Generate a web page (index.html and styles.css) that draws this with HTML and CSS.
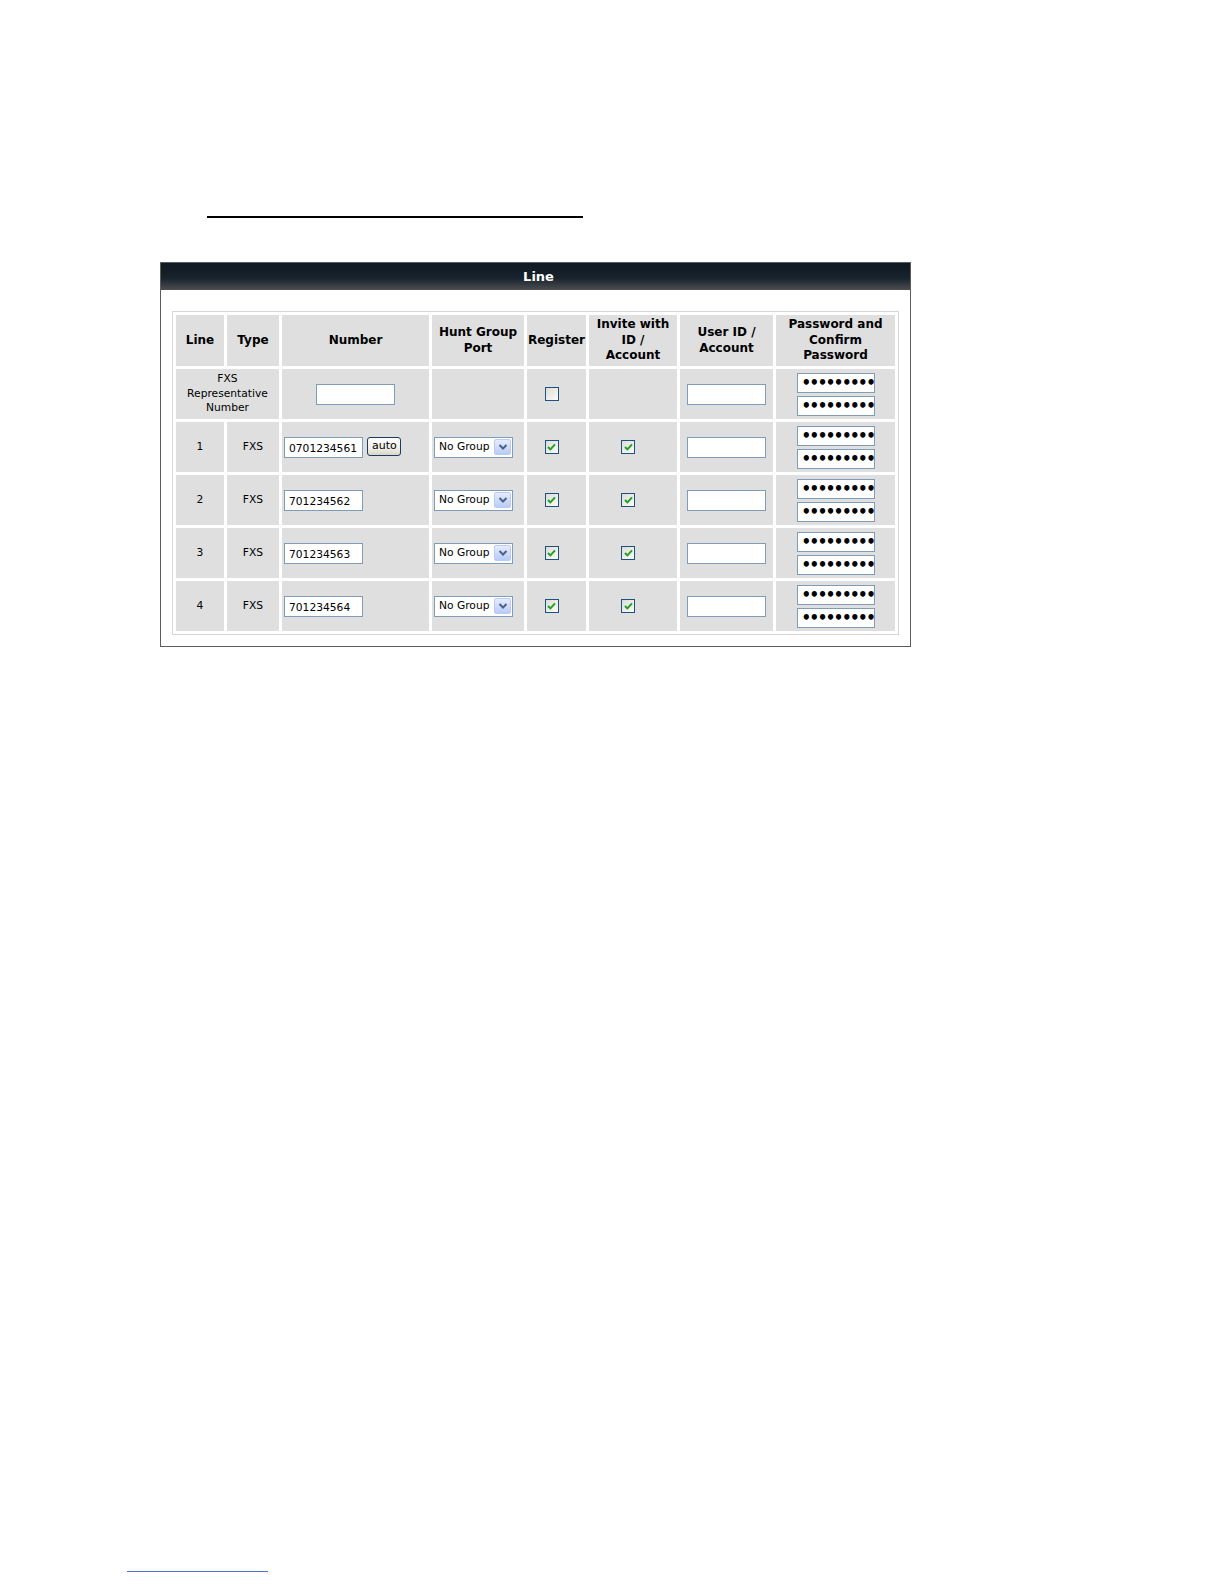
FILE: index.html
```html
<!doctype html>
<html lang="en">

<head>
  <meta charset="UTF-8" />
  <title>Line</title>
  <link rel="stylesheet" href="styles.css">
</head>

<body>
  <div class="title-rule"></div>

  <div class="panel">
    <div class="panel-head">Line</div>
    <div class="panel-body">
      <table class="lines">
        <tr class="head">
          <th class="c-line">Line</th>
          <th class="c-type">Type</th>
          <th class="c-num">Number</th>
          <th class="c-hunt">Hunt Group<br>Port</th>
          <th class="c-reg">Register</th>
          <th class="c-inv">Invite with<br>ID /<br>Account</th>
          <th class="c-user">User ID /<br>Account</th>
          <th class="c-pass">Password and<br>Confirm<br>Password</th>
        </tr>
        <tr>
          <td colspan="2" class="rep">FXS<br>Representative<br>Number</td>
          <td class="center"><input class="field" type="text" value=""></td>
          <td></td>
          <td class="center"><span class="check"></span></td>
          <td></td>
          <td class="center"><input class="field" type="text" value=""></td>
          <td class="center">
            <div class="pw-pair">
              <input class="field pw" type="password" value="123456789">
              <input class="field pw" type="password" value="123456789">
            </div>
          </td>
        </tr>
        <tr>
          <td>1</td>
          <td>FXS</td>
          <td class="left">
            <input class="field" type="text" value="0701234561">
            <button class="auto">auto</button>
          </td>
          <td class="left">
            <div class="select"><span class="sel-text">No Group</span><span class="sel-arrow"><svg width="10" height="8" viewBox="0 0 10 8"><path d="M1.5 2 L5 5.5 L8.5 2" stroke="#4d6185" stroke-width="2" fill="none"/></svg></span></div>
          </td>
          <td class="center"><span class="check on"><svg width="9" height="8" viewBox="0 0 9 8"><path d="M1 4 L3.4 6.4 L8 1.4" stroke="#21a121" stroke-width="2" fill="none"/></svg></span></td>
          <td class="center"><span class="check on"><svg width="9" height="8" viewBox="0 0 9 8"><path d="M1 4 L3.4 6.4 L8 1.4" stroke="#21a121" stroke-width="2" fill="none"/></svg></span></td>
          <td class="center"><input class="field" type="text" value=""></td>
          <td class="center">
            <div class="pw-pair">
              <input class="field pw" type="password" value="123456789">
              <input class="field pw" type="password" value="123456789">
            </div>
          </td>
        </tr>
        <tr>
          <td>2</td>
          <td>FXS</td>
          <td class="left"><input class="field" type="text" value="701234562"></td>
          <td class="left">
            <div class="select"><span class="sel-text">No Group</span><span class="sel-arrow"><svg width="10" height="8" viewBox="0 0 10 8"><path d="M1.5 2 L5 5.5 L8.5 2" stroke="#4d6185" stroke-width="2" fill="none"/></svg></span></div>
          </td>
          <td class="center"><span class="check on"><svg width="9" height="8" viewBox="0 0 9 8"><path d="M1 4 L3.4 6.4 L8 1.4" stroke="#21a121" stroke-width="2" fill="none"/></svg></span></td>
          <td class="center"><span class="check on"><svg width="9" height="8" viewBox="0 0 9 8"><path d="M1 4 L3.4 6.4 L8 1.4" stroke="#21a121" stroke-width="2" fill="none"/></svg></span></td>
          <td class="center"><input class="field" type="text" value=""></td>
          <td class="center">
            <div class="pw-pair">
              <input class="field pw" type="password" value="123456789">
              <input class="field pw" type="password" value="123456789">
            </div>
          </td>
        </tr>
        <tr>
          <td>3</td>
          <td>FXS</td>
          <td class="left"><input class="field" type="text" value="701234563"></td>
          <td class="left">
            <div class="select"><span class="sel-text">No Group</span><span class="sel-arrow"><svg width="10" height="8" viewBox="0 0 10 8"><path d="M1.5 2 L5 5.5 L8.5 2" stroke="#4d6185" stroke-width="2" fill="none"/></svg></span></div>
          </td>
          <td class="center"><span class="check on"><svg width="9" height="8" viewBox="0 0 9 8"><path d="M1 4 L3.4 6.4 L8 1.4" stroke="#21a121" stroke-width="2" fill="none"/></svg></span></td>
          <td class="center"><span class="check on"><svg width="9" height="8" viewBox="0 0 9 8"><path d="M1 4 L3.4 6.4 L8 1.4" stroke="#21a121" stroke-width="2" fill="none"/></svg></span></td>
          <td class="center"><input class="field" type="text" value=""></td>
          <td class="center">
            <div class="pw-pair">
              <input class="field pw" type="password" value="123456789">
              <input class="field pw" type="password" value="123456789">
            </div>
          </td>
        </tr>
        <tr>
          <td>4</td>
          <td>FXS</td>
          <td class="left"><input class="field" type="text" value="701234564"></td>
          <td class="left">
            <div class="select"><span class="sel-text">No Group</span><span class="sel-arrow"><svg width="10" height="8" viewBox="0 0 10 8"><path d="M1.5 2 L5 5.5 L8.5 2" stroke="#4d6185" stroke-width="2" fill="none"/></svg></span></div>
          </td>
          <td class="center"><span class="check on"><svg width="9" height="8" viewBox="0 0 9 8"><path d="M1 4 L3.4 6.4 L8 1.4" stroke="#21a121" stroke-width="2" fill="none"/></svg></span></td>
          <td class="center"><span class="check on"><svg width="9" height="8" viewBox="0 0 9 8"><path d="M1 4 L3.4 6.4 L8 1.4" stroke="#21a121" stroke-width="2" fill="none"/></svg></span></td>
          <td class="center"><input class="field" type="text" value=""></td>
          <td class="center">
            <div class="pw-pair">
              <input class="field pw" type="password" value="123456789">
              <input class="field pw" type="password" value="123456789">
            </div>
          </td>
        </tr>
      </table>
    </div>
  </div>

  <div class="foot-rule"></div>
</body>

</html>
```

FILE: styles.css
```css
body {
  margin: 0;
  background: #fff;
  font-family: "DejaVu Sans", Verdana, sans-serif;
}

.title-rule {
  margin: 216px 0 0 207px;
  width: 376px;
  border-top: 2px solid #000;
}

.panel {
  margin: 44px 0 0 160px;
  width: 749px;
  border: 1px solid #5c5c5c;
  background: #fff;
}

.panel-head {
  height: 27px;
  line-height: 27px;
  padding-left: 6px;
  text-align: center;
  color: #fff;
  font-weight: bold;
  font-size: 13px;
  background: linear-gradient(#0e1923 0%, #17222c 55%, #4c4e50 100%);
}

.panel-body {
  padding: 21px 11px 11px 11px;
}

.lines {
  width: 727px;
  border: 1px solid #d6d6d6;
  border-spacing: 3px;
  table-layout: fixed;
}

.lines th,
.lines td {
  background: #dfdfdf;
  padding: 0;
  text-align: center;
  vertical-align: middle;
  color: #000;
}

.lines tr {
  height: 50px;
}

.lines tr.head {
  height: 51px;
}

.lines th {
  font-size: 12px;
  font-weight: bold;
  line-height: 15.4px;
}

.lines td {
  font-size: 10.7px;
  line-height: 14.5px;
}

.c-line { width: 48px; }
.c-type { width: 52px; }
.c-num  { width: 147px; }
.c-hunt { width: 92px; }
.c-reg  { width: 59px; }
.c-inv  { width: 88px; }
.c-user { width: 93px; }
.c-pass { width: 119px; }

.lines td.left {
  text-align: left;
  padding-left: 2px;
}

.field {
  box-sizing: border-box;
  width: 79px;
  height: 21px;
  margin: 0;
  padding: 2px 4px 0;
  border: 1px solid #7f9db9;
  background: #fff;
  font-family: "DejaVu Sans", Verdana, sans-serif;
  font-size: 10.7px;
  color: #000;
  vertical-align: middle;
}

.pw-pair {
  display: flex;
  flex-direction: column;
  align-items: center;
  gap: 3px;
}

.field.pw {
  width: 78px;
  height: 20px;
  font-size: 15px;
  font-weight: bold;
  letter-spacing: -1.5px;
  line-height: 18px;
  padding: 0 0 0 4px;
}

.auto {
  box-sizing: border-box;
  width: 34px;
  height: 19px;
  margin: 0 0 2px 1px;
  padding: 0 0 2px;
  border: 1px solid #1d3c63;
  border-radius: 3px;
  background: linear-gradient(#ffffff, #f0efe8 60%, #d9d6c8);
  font-family: "DejaVu Sans", Verdana, sans-serif;
  font-size: 11px;
  color: #000;
  vertical-align: middle;
}

.select {
  box-sizing: border-box;
  display: inline-flex;
  align-items: center;
  justify-content: space-between;
  width: 79px;
  height: 21px;
  padding: 1px 1px 1px 4px;
  border: 1px solid #7f9db9;
  background: #fff;
  vertical-align: middle;
}

.sel-text {
  padding-top: 1px;
}

.sel-arrow {
  display: flex;
  align-items: center;
  justify-content: center;
  width: 17px;
  height: 16px;
  box-sizing: border-box;
  border: 1px solid #bccbf3;
  border-radius: 2px;
  background: linear-gradient(#e4ecfe, #b9cbf7);
}

.check {
  box-sizing: border-box;
  display: inline-flex;
  align-items: center;
  justify-content: center;
  width: 14px;
  height: 14px;
  margin-right: 10px;
  border: 1px solid #1c5180;
  background: linear-gradient(135deg, #dcdcd7, #fbfbf9);
  vertical-align: middle;
}

.foot-rule {
  margin: 924px 0 0 127px;
  width: 141px;
  border-top: 1px solid #4f6fc8;
}
```
